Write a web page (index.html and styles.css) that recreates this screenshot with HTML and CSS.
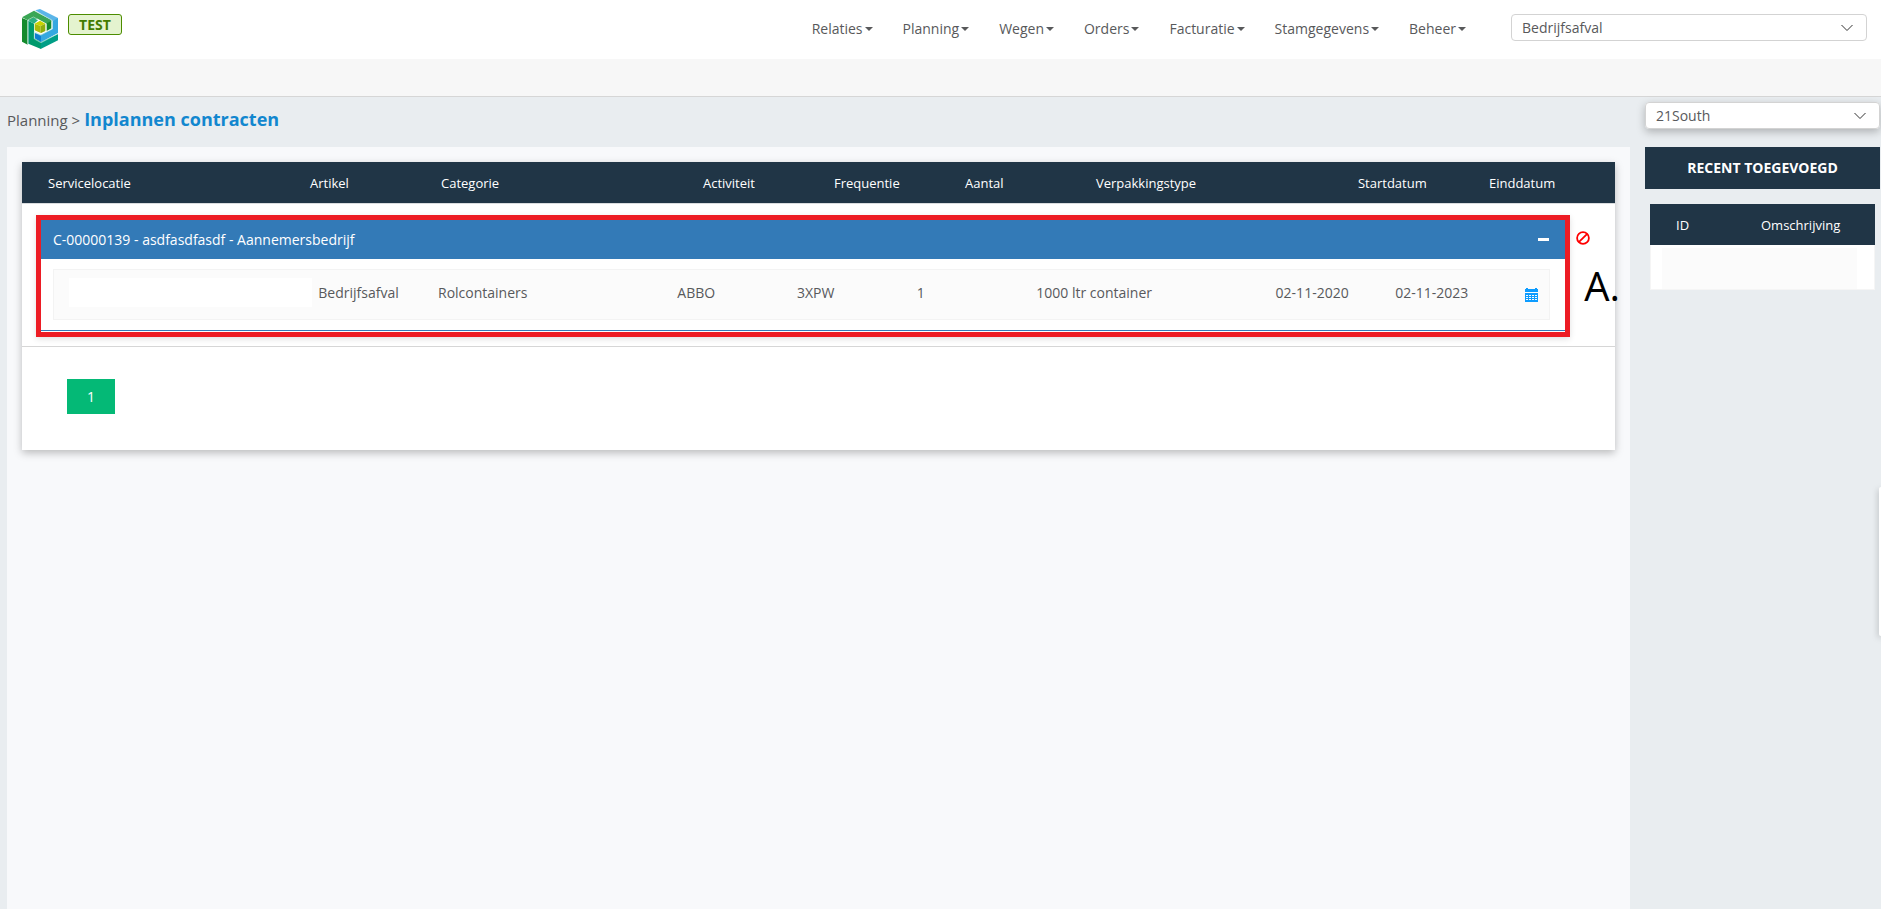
FILE: index.html
```html
<!DOCTYPE html>
<html lang="nl">
<head>
<meta charset="utf-8">
<title>Inplannen contracten</title>
<link rel="stylesheet" href="styles.css">
</head>
<body>
<header class="topbar">
  <a class="logo" href="#" aria-label="Home">
    <svg viewBox="0 0 108 120" width="36" height="40" aria-hidden="true">
      <path fill="#148a2c" d="M0 27 17 34V107L0 98Z"/>
      <path fill="#3aa655" d="M0 25 36 5 88 33V38L74 44 47 29 17 34Z"/>
      <path fill="#5bb5e8" d="M40 4 54 0 108 27V33L92 36Z"/>
      <path fill="#35a8e0" d="M92 36 108 28V72L58 99 40 88V72L56 78 92 60Z"/>
      <path fill="#0f7fd0" d="M38 72 57 82V99L38 88Z"/>
      <path fill="#148a2c" d="M74 43 88 36V58L74 66Z"/>
      <path fill="#009a6c" d="M19 35 36 44V88L57 99V120L19 104Z"/>
      <path fill="#2bb082" d="M19 35 34 26 48 34 36 44Z"/>
      <path fill="#009e86" d="M57 100 108 75V94L56 120Z"/>
      <path fill="#c9d400" d="M38 44 54 35 70 44 56 51Z"/>
      <path fill="#aabb0b" d="M38 44 56 51V72L38 64Z"/>
      <path fill="#8fae0d" d="M56 51 70 44V66L56 73Z"/>
      <path fill="none" stroke="#b5e2d6" stroke-width="2" d="M38 5 90 33V60L57 78 37 68V90L57 101 108 74M17 107V33L34 24 49 32"/>
    </svg>
  </a>
  <span class="env">TEST</span>
  <nav class="menu">
    <button type="button">Relaties</button>
    <button type="button">Planning</button>
    <button type="button">Wegen</button>
    <button type="button">Orders</button>
    <button type="button">Facturatie</button>
    <button type="button">Stamgegevens</button>
    <button type="button">Beheer</button>
  </nav>
  <div class="select module">
    <select aria-label="Module"><option>Bedrijfsafval</option></select>
    <svg viewBox="0 0 12 8" width="12" height="8" aria-hidden="true"><path d="M0.5 1 6 6.500 11.500 1"/></svg>
  </div>
</header>
<div class="subbar"></div>
<div class="page">
  <main class="main">
    <div class="crumbs"><span>Planning &gt;</span><h1>Inplannen contracten</h1></div>
    <div class="panel">
      <section class="card">
        <div class="card-head">
          <table class="grid">
            <colgroup><col class="w2"><col><col class="w2"><col><col><col><col class="w2"><col><col></colgroup>
            <thead>
              <tr><th>Servicelocatie</th><th>Artikel</th><th>Categorie</th><th>Activiteit</th><th>Frequentie</th><th>Aantal</th><th>Verpakkingstype</th><th>Startdatum</th><th>Einddatum</th></tr>
            </thead>
          </table>
        </div>
        <div class="entry">
          <div class="group">
            <button type="button" class="group-head" aria-expanded="true"><span>C-00000139 - asdfasdfasdf - Aannemersbedrijf</span><i class="minus"></i></button>
            <div class="group-body">
              <div class="line">
                <table class="grid">
                  <colgroup><col class="w2"><col><col class="w2"><col><col><col><col class="w2"><col><col></colgroup>
                  <tbody>
                    <tr><td><span class="blank"></span></td><td>Bedrijfsafval</td><td>Rolcontainers</td><td>ABBO</td><td>3XPW</td><td>1</td><td>1000 ltr container</td><td>02-11-2020</td><td>02-11-2023</td></tr>
                  </tbody>
                </table>
                <button type="button" class="icon" aria-label="Inplannen">
                  <svg viewBox="0 0 13 14" width="13" height="14" aria-hidden="true"><path fill="#0d9cff" d="M0 1H1V0H3V1H10V0H12V1H13V4H0ZM0 5H13V14H0Z"/><path stroke="#fbfbfb" stroke-dasharray="2 1" d="M1 7.500H12M1 9.500H12M1 11.500H12"/></svg>
                </button>
              </div>
            </div>
          </div>
          <div class="side-tools">
            <button type="button" class="icon" aria-label="Blokkeren">
              <svg viewBox="0 0 14 14" width="14" height="14" aria-hidden="true"><g fill="none" stroke="#f00" stroke-width="1.800"><circle cx="7" cy="7" r="5.900"/><path d="M2.800 11.200 11.200 2.800"/></g></svg>
            </button>
          </div>
          <span class="note">A.</span>
        </div>
        <div class="pager"><button type="button">1</button></div>
      </section>
    </div>
  </main>
  <aside class="aside">
    <div class="select depot">
      <select aria-label="Vestiging"><option>21South</option></select>
      <svg viewBox="0 0 12 8" width="12" height="8" aria-hidden="true"><path d="M0.5 1 6 6.500 11.500 1"/></svg>
    </div>
    <h2>RECENT TOEGEVOEGD</h2>
    <table class="recent">
      <thead><tr><th class="id">ID</th><th>Omschrijving</th></tr></thead>
      <tbody><tr><td colspan="2"><div class="recent-row"></div></td></tr></tbody>
    </table>
  </aside>
</div>
<div class="drawer"></div>
</body>
</html>
```
FILE: styles.css
```css
* { box-sizing: border-box; }

body {
  display: flex;
  flex-direction: column;
  min-height: 100vh;
  margin: 0;
  background: #e9edf0;
  color: #58595b;
  font: 14px/20px "Open Sans", sans-serif;
}

button, select { font: inherit; color: inherit; }
button { border: 0; padding: 0; background: none; cursor: pointer; }
table { width: 100%; border-collapse: separate; border-spacing: 0; table-layout: fixed; }
th, td { padding: 0; text-align: left; font-weight: 400; }
h1, h2 { margin: 0; }

.topbar {
  display: flex;
  align-items: flex-start;
  height: 59px;
  padding: 0 14px 0 22px;
  background: #fff;
}
.logo { display: block; margin-top: 9px; line-height: 0; }
.env {
  margin: 14px 0 0 10px;
  width: 54px;
  border: 1px solid #4c8c00;
  border-radius: 3px;
  background: #e4f3cf;
  color: #437c00;
  font-weight: 700;
  line-height: 19px;
  text-align: center;
}
.menu { display: flex; gap: 30px; margin: 19px 45px 0 auto; }
.menu button { display: flex; align-items: center; gap: 2px; }
.menu button::after {
  content: "";
  border: 4px solid transparent;
  border-top-color: currentColor;
  border-bottom: 0;
}

.select { position: relative; }
.select select {
  display: block;
  width: 100%;
  height: 27px;
  padding: 0 10px;
  border: 1px solid #d3d3d3;
  border-radius: 4px;
  background: #fff;
  appearance: none;
}
.select svg {
  position: absolute;
  top: 10px;
  right: 14px;
  fill: none;
  stroke: #333;
  pointer-events: none;
}
.module { width: 356px; margin-top: 14px; }

.subbar { height: 38px; border-bottom: 1px solid #d6d6d6; background: #f7f7f7; }

.page { display: flex; flex: 1; gap: 15px; padding: 0 1px 0 7px; }
.main { display: flex; flex: 1; flex-direction: column; min-width: 0; }
.crumbs { display: flex; align-items: baseline; gap: 4px; height: 50px; padding-top: 10px; font-size: 15px; }
.crumbs h1 { color: #1287cf; font-size: 18px; line-height: 24px; }
.panel { flex: 1; padding: 15px; background: #f8f9fb; }
.card { background: #fff; box-shadow: 0 3px 8px rgba(0, 0, 0, .25); }

.card-head { padding-right: 21px; background: #203546; }
.card-head th {
  height: 41px;
  padding-left: 26px;
  color: #fff;
  font-size: 13px;
}
.grid .w2 { width: calc(100% / 6); }

.entry {
  position: relative;
  display: flex;
  gap: 6px;
  padding: 11px 25px 9px 14px;
  border-top: 1px solid #d9dcde;
  border-bottom: 1px solid #d6d6d6;
}
.group { flex: 1; border: 5px solid #ed1c24; box-shadow: 0 2px 6px rgba(0, 0, 0, .12); }
.group-head {
  display: flex;
  align-items: center;
  justify-content: space-between;
  width: 100%;
  height: 39px;
  padding: 0 16px 0 12px;
  background: #337ab7;
  color: #fff;
}
.minus { width: 11px; height: 3px; background: #fff; }
.group-body {
  padding: 10px 15px 10px 12px;
  border-bottom: 1px solid #337ab7;
  margin-bottom: 1px;
}
.line {
  display: flex;
  align-items: flex-start;
  gap: 20px;
  height: 51px;
  padding: 0 11px 0 15px;
  border: 1px solid #f3f3f3;
  background: #fbfbfb;
}
.line .grid { flex: 1; }
.line td { height: 45px; padding-left: 10px; white-space: nowrap; }
.blank { display: block; width: 243px; height: 29px; margin-left: -10px; background: #fff; }
.icon { line-height: 0; align-self: center; }
.side-tools { padding-top: 15px; width: 14px; }
.note {
  position: absolute;
  top: 58px;
  right: -5px;
  color: #000;
  font-size: 40px;
  line-height: 48px;
}

.pager { padding: 32px 45px 36px; }
.pager button { display: block; width: 48px; height: 35px; background: #04b976; color: #fff; }

.aside { width: 235px; padding-top: 5px; }
.depot { box-shadow: 0 3px 8px rgba(0, 0, 0, .25); border-radius: 4px; }
.aside h2 {
  margin: 18px 0 15px;
  background: #203546;
  color: #fff;
  font-size: 14px;
  line-height: 42px;
  text-align: center;
}
.recent { width: 225px; margin: 0 5px; background: #fff; }
.recent th { height: 41px; padding-left: 26px; background: #203546; color: #fff; font-size: 13px; }
.recent .id { width: 85px; }
.recent td { padding: 3px 17px 0 11px; border: 1px solid #f5f5f5; border-top: 0; }
.recent-row { height: 41px; background: #fbfbfb; }

.drawer {
  position: fixed;
  top: 487px;
  right: 0;
  width: 2px;
  height: 149px;
  border-radius: 4px 0 0 4px;
  background: #fff;
  box-shadow: 0 2px 6px rgba(0, 0, 0, .4);
}
```
